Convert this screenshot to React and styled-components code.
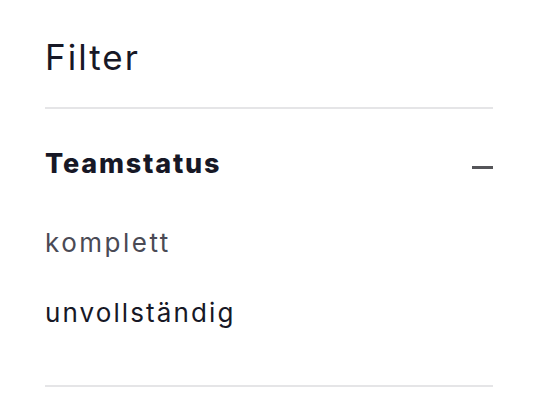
import React from 'react'
import styled, { createGlobalStyle } from 'styled-components'

const GlobalStyle = createGlobalStyle`
  body {
    margin: 0;
    background: #ffffff;
    font-family: Inter, "Noto Sans", sans-serif;
  }
`

const Panel = styled.div`
  width: 448px;
  padding: 0 0 0 45px;
  color: #171826;
`

const Title = styled.h2`
  margin: 0;
  padding: 35px 0 28px;
  font-size: 35px;
  font-weight: 400;
  letter-spacing: 2px;
  line-height: 44px;
  border-bottom: 2px solid #e5e5e7;
`

const Section = styled.div`
  border-bottom: 2px solid #e5e5e7;
  padding: 38px 0 56px;
`

const SectionHead = styled.div`
  display: flex;
  justify-content: space-between;
  align-items: flex-start;
  line-height: 34px;
`

const SectionTitle = styled.div`
  font-size: 27px;
  font-weight: 800;
  letter-spacing: 1.8px;
`

const Minus = styled.span`
  display: block;
  width: 21px;
  height: 3px;
  background: #555559;
  margin-top: 19px;
`

const Options = styled.ul`
  list-style: none;
  margin: 46px 0 0;
  padding: 0;
  display: flex;
  flex-direction: column;
  gap: 38px;
`

const Option = styled.li`
  font-size: 26px;
  line-height: 32px;
  letter-spacing: ${props => props.muted ? '2.5px' : '2.1px'};
  color: ${props => props.muted ? '#4a4a55' : '#171826'};
`

export default function App() {
  return (
    <>
      <GlobalStyle />
      <Panel>
        <Title>Filter</Title>
        <Section>
          <SectionHead>
            <SectionTitle>Teamstatus</SectionTitle>
            <Minus />
          </SectionHead>
          <Options>
            <Option muted>komplett</Option>
            <Option>unvollständig</Option>
          </Options>
        </Section>
      </Panel>
    </>
  )
}
